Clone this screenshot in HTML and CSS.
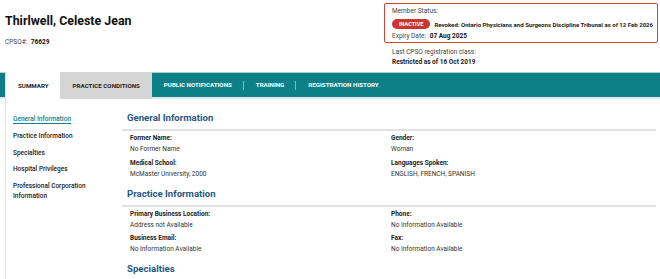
FILE: index.html
```html
<!DOCTYPE html>
<html lang="en">
<head>
    <meta charset="UTF-8">
    <meta name="viewport" content="width=device-width, initial-scale=1.0">
    <title>Thirlwell, Celeste Jean</title>
    <link rel="stylesheet" href="styles.css">
</head>
<body>
    <header class="profileHead">
        <div class="who">
            <h1 class="name">Thirlwell, Celeste Jean</h1>
            <div class="cpso">CPSO#: <b>76629</b></div>
        </div>
        <div class="statusCol">
            <div class="statusBox">
                <div class="label">Member Status:</div>
                <div class="statusRow">
                    <span class="badge">INACTIVE</span>
                    <b>Revoked: Ontario Physicians and Surgeons Discipline Tribunal as of 12 Feb 2026</b>
                </div>
                <div class="expiry">Expiry Date: <b>07 Aug 2025</b></div>
            </div>
            <div class="regClass">
                <div class="label">Last CPSO registration class:</div>
                <b>Restricted as of 16 Oct 2019</b>
            </div>
        </div>
    </header>
    <nav class="tabs">
        <div class="tab active">SUMMARY</div>
        <div class="tab grey">PRACTICE CONDITIONS</div>
        <div class="tab">PUBLIC NOTIFICATIONS</div>
        <div class="sep"></div>
        <div class="tab">TRAINING</div>
        <div class="sep"></div>
        <div class="tab">REGISTRATION HISTORY</div>
    </nav>
    <div class="page">
        <aside class="sideNav">
            <div class="link current">General Information</div>
            <div class="link">Practice Information</div>
            <div class="link">Specialties</div>
            <div class="link">Hospital Privileges</div>
            <div class="link">Professional Corporation Information</div>
        </aside>
        <main class="main">
            <section class="block">
                <h2 class="heading">General Information</h2>
                <div class="fields">
                    <div class="field"><div class="key">Former Name:</div><div class="val">No Former Name</div></div>
                    <div class="field"><div class="key">Gender:</div><div class="val">Woman</div></div>
                    <div class="field"><div class="key">Medical School:</div><div class="val">McMaster University, 2000</div></div>
                    <div class="field"><div class="key">Languages Spoken:</div><div class="val">ENGLISH, FRENCH, SPANISH</div></div>
                </div>
            </section>
            <section class="block">
                <h2 class="heading">Practice Information</h2>
                <div class="fields">
                    <div class="field"><div class="key">Primary Business Location:</div><div class="val">Address not Available</div></div>
                    <div class="field"><div class="key">Phone:</div><div class="val">No Information Available</div></div>
                    <div class="field"><div class="key">Business Email:</div><div class="val">No Information Available</div></div>
                    <div class="field"><div class="key">Fax:</div><div class="val">No Information Available</div></div>
                </div>
            </section>
            <section class="block">
                <h2 class="heading">Specialties</h2>
            </section>
        </main>
    </div>
</body>
</html>
```
FILE: styles.css
```css
:root{
    --teal: #0d8087;
    --tealText: #127e89;
    --headBlue: #1f5784;
    --red: #d6403a;
    --text: #1b1b1b;
}
*{
    box-sizing: border-box;
}
body{
    margin: 0;
    font-family: Roboto, "Liberation Sans", sans-serif;
    font-size: 6.5px;
    color: var(--text);
    background: #ffffff;
    overflow: hidden;
}
b{
    font-weight: 700;
}
.profileHead{
    display: flex;
    justify-content: space-between;
    height: 72px;
    padding-left: 5px;
    padding-right: 2px;
}
.name{
    margin: 14px 0 0 0;
    font-size: 12.4px;
    line-height: 14px;
    font-weight: 700;
    color: #111111;
}
.cpso{
    margin-top: 9px;
    line-height: 10px;
    color: #444444;
}
.cpso b{
    color: #111111;
    margin-left: 2px;
}
.statusCol{
    padding-top: 3px;
    width: 274px;
}
.statusBox{
    border: 1.5px solid var(--red);
    border-radius: 2px;
    padding: 2px 3px 1px 7px;
}
.label{
    line-height: 10px;
    color: #444444;
}
.statusRow{
    display: flex;
    align-items: center;
    gap: 4px;
    margin: 3px 0 2px 0;
}
.statusRow b{
    white-space: nowrap;
    font-size: 6.05px;
}
.badge{
    display: inline-block;
    background: #c9372e;
    color: #ffffff;
    font-weight: 700;
    font-size: 5.5px;
    line-height: 10px;
    padding: 0 7px;
    border-radius: 6px;
}
.expiry{
    line-height: 10px;
    color: #444444;
}
.expiry b{
    color: #111111;
    margin-left: 2px;
}
.regClass{
    padding: 4px 0 0 8px;
    line-height: 10px;
}
.tabs{
    display: flex;
    align-items: center;
    height: 27px;
    padding-left: 5px;
    background: var(--teal);
    border-top: 1px solid #a7d2d5;
    border-bottom: 2px solid #dfe9ea;
}
.tab{
    display: flex;
    align-items: center;
    height: 100%;
    padding: 0 11px 0 12px;
    color: #ffffff;
    font-weight: 700;
    font-size: 6.2px;
}
.tab.active,
.tab.grey{
    color: #222222;
    height: calc(100% + 3px);
    margin-top: -1px;
    margin-bottom: -2px;
}
.tab.active{
    background: #ffffff;
    border-left: 1px solid #e3e3e3;
}
.tab.grey{
    background: #d5d5d5;
    padding: 0 12px 0 13px;
}
.sep{
    width: 1px;
    height: 9px;
    background: rgba(255,255,255,0.45);
}
.page{
    display: flex;
    margin-left: 5px;
    border-left: 1px solid #e6e6e6;
    min-height: 200px;
}
.sideNav{
    width: 116px;
    padding: 15px 8px 0 7px;
    display: flex;
    flex-direction: column;
    gap: 6.8px;
}
.link{
    font-weight: 500;
    line-height: 10px;
    color: #222222;
}
.link.current{
    color: var(--tealText);
    text-decoration: underline;
    text-underline-offset: 2px;
}
.main{
    flex: 1;
    margin-right: 4px;
    padding-top: 12px;
}
.block{
    margin-bottom: 8px;
}
.heading{
    margin: 0;
    padding: 0 0 4px 5px;
    font-size: 9.6px;
    line-height: 14px;
    font-weight: 700;
    color: var(--headBlue);
    border-bottom: 2px solid #e1e1e8;
}
.fields{
    display: grid;
    grid-template-columns: 261px 1fr;
    row-gap: 3.5px;
    padding: 2px 0 0 8px;
}
.key{
    font-weight: 700;
    line-height: 10px;
}
.val{
    margin-top: 1px;
    line-height: 10px;
    color: #333333;
}
```
